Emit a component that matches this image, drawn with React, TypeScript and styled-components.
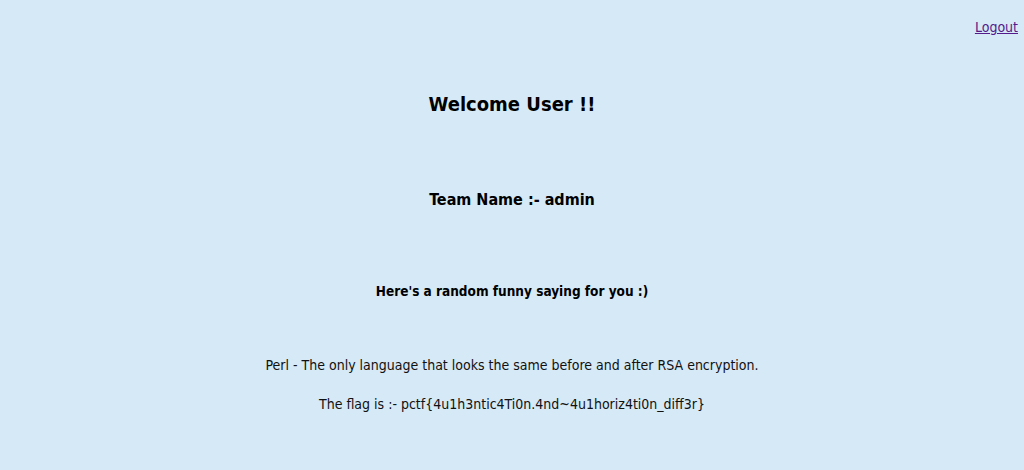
import { FunctionComponent } from 'react'
import styled, { createGlobalStyle } from 'styled-components'

const GlobalStyle = createGlobalStyle`
  html, body {
    margin: 0;
    padding: 0;
    background-color: #d6e9f7;
  }
  body {
    font-family: "DejaVu Sans Condensed", "DejaVu Sans", sans-serif;
    font-stretch: condensed;
    color: #111;
  }
`

const Page = styled.div`
  min-height: 470px;
  display: flex;
  flex-direction: column;
`

const TopBar = styled.div`
  display: flex;
  justify-content: flex-end;
  padding: 17px 6px 0 0;
  height: 20px;
`

const LogoutLink = styled.a`
  color: #551a8b;
  font-size: 14px;
  line-height: 20px;
  text-decoration: underline;
`

const Content = styled.main`
  display: flex;
  flex-direction: column;
  align-items: center;
  text-align: center;
`

const Title = styled.h2`
  margin: 55px 0 0;
  font-size: 20px;
  line-height: 24px;
  font-weight: bold;
  color: #000;
`

const TeamName = styled.h3`
  margin: 74px 0 0;
  font-size: 16px;
  line-height: 20px;
  font-weight: bold;
  color: #000;
`

const SayingHeading = styled.h4`
  margin: 71px 0 0;
  font-size: 13.5px;
  line-height: 20px;
  font-weight: bold;
  color: #000;
`

const Line = styled.p<{ $gap: number }>`
  margin: ${(p) => p.$gap}px 0 0;
  font-size: 14px;
  line-height: 20px;
`

const App: FunctionComponent = () => {
  return (
    <>
      <GlobalStyle />
      <Page>
        <TopBar>
          <LogoutLink href="#logout">Logout</LogoutLink>
        </TopBar>
        <Content>
          <Title>Welcome User !!</Title>
          <TeamName>Team Name :- admin</TeamName>
          <SayingHeading>Here's a random funny saying for you :)</SayingHeading>
          <Line $gap={54}>Perl - The only language that looks the same before and after RSA encryption.</Line>
          <Line $gap={19}>The flag is :- pctf{'{'}4u1h3ntic4Ti0n.4nd~4u1horiz4ti0n_diff3r{'}'}</Line>
        </Content>
      </Page>
    </>
  )
}

export default App
